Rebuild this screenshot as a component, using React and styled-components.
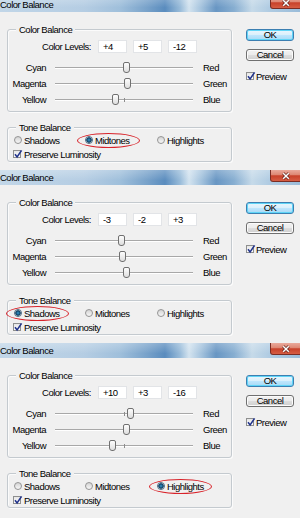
import React from "react";
import styled, { createGlobalStyle } from "styled-components";

const Global = createGlobalStyle`
  html, body { margin: 0; padding: 0; background: #f0f0f0; overflow: hidden; }
  body {
    font-family: "Liberation Sans", Arial, sans-serif;
    font-size: 9.5px;
    letter-spacing: -0.5px;
    color: #000;
  }
`;

const Page = styled.div`
  width: 300px;
  height: 518px;
  overflow: hidden;
`;

const Stack = styled.div`
  margin-top: -3px;
  display: flex;
  flex-direction: column;
`;

const Dialog = styled.section`
  height: 173px;
  display: flex;
  flex-direction: column;
  background: #f0f0f0;
`;

const TitleBar = styled.header`
  height: 15px;
  flex: none;
  display: flex;
  align-items: flex-start;
  background:
    linear-gradient(180deg, rgba(255,255,255,0.25) 0%, rgba(255,255,255,0) 70%),
    linear-gradient(90deg, #c1d6e8 0%, #b5cde3 28%, #9fbfdb 40%, #78a2ca 49%, #5a8cbe 55%,
      #98bbd9 60%, #d3e3ef 63%, #a6c4de 67%, #6896c3 72%, #87aed1 78%, #c6dae9 84%,
      #afcbe2 90%, #9abcd9 100%);
`;

const Title = styled.span`
  flex: 1;
  line-height: 15px;
  color: #000;
`;

const CloseButton = styled.div`
  width: 32px;
  height: 12px;
  margin-right: -2px;
  box-sizing: border-box;
  border: 1px solid #7a2d24;
  border-top: none;
  border-radius: 0 0 3px 3px;
  background: linear-gradient(180deg, #eaaa9c 0%, #dd8672 45%, #c8412a 52%, #d65d43 100%);
  display: flex;
  align-items: center;
  justify-content: center;
`;

const Client = styled.div`
  flex: 1;
  display: flex;
  padding: 17px 6px 0 7px;
  gap: 14px;
`;

const LeftCol = styled.div`
  width: 225px;
  display: flex;
  flex-direction: column;
  gap: 15px;
`;

const RightCol = styled.div`
  width: 48px;
  display: flex;
  flex-direction: column;
`;

const GroupBox = styled.div`
  position: relative;
  border: 1px solid #c4cacf;
  border-radius: 3px;
  box-shadow: inset 1px 1px 0 #fbfbfb, 1px 1px 0 #fbfbfb;
  padding: ${(p) => p.$pad};
  display: flex;
  flex-direction: column;
`;

const GroupTitle = styled.span`
  position: absolute;
  top: -6px;
  left: 8px;
  padding: 0 3px;
  background: #f0f0f0;
  line-height: 11px;
`;

const LevelsRow = styled.div`
  display: flex;
  align-items: center;
  height: 13px;
  margin-bottom: 6px;
`;

const LevelsLabel = styled.span`
  width: 83px;
  text-align: right;
  margin-right: 7px;
`;

const LevelInput = styled.input`
  width: 29px;
  height: 13px;
  box-sizing: border-box;
  border: 1px solid #e2e4e7;
  background: #fff;
  font: inherit;
  letter-spacing: inherit;
  color: #000;
  padding: 0 0 0 4px;
  margin: 0 6px 0 0;
  outline: none;
`;

const SliderRow = styled.div`
  display: flex;
  align-items: center;
  height: 16px;
`;

const SliderLabel = styled.span`
  width: 38px;
  text-align: right;
`;

const Track = styled.div`
  position: relative;
  width: 138px;
  height: 1px;
  margin: 0 10px 0 9px;
  background: #a8a8a8;
  box-shadow: 0 1px 0 #fff;
  &::after {
    content: "";
    position: absolute;
    left: 69px;
    top: -1px;
    width: 1px;
    height: 4px;
    background: #8c8c8c;
  }
`;

const Thumb = styled.span`
  position: absolute;
  top: -5px;
  width: 7px;
  height: 11px;
  margin-left: -3.5px;
  box-sizing: border-box;
  border: 1px solid #707070;
  border-radius: 2px 2px 3px 3px;
  background: linear-gradient(180deg, #fdfdfd, #dedede);
  z-index: 1;
`;

const ToneGrid = styled.div`
  display: grid;
  grid-template-columns: 71px 72px auto;
  align-items: center;
  height: 12px;
  padding-left: 6px;
`;

const Option = styled.label`
  position: relative;
  display: flex;
  align-items: center;
  gap: 2px;
`;

const Radio = styled.span`
  width: 8px;
  height: 8px;
  box-sizing: border-box;
  border-radius: 50%;
  border: 1px solid ${(p) => (p.$on ? "#4d6b82" : "#959595")};
  background: ${(p) =>
    p.$on
      ? "radial-gradient(circle, #3a9ccc 0, #1b5f8c 1.4px, #0f3d5e 2.4px, #cfdbe4 3px, #f4f4f4 4px)"
      : "linear-gradient(180deg, #d4d4d4, #f7f7f7)"};
`;

const Highlight = styled.span`
  position: absolute;
  left: -8px;
  top: -2px;
  width: 63px;
  height: 15px;
  box-sizing: border-box;
  border: 1.5px solid #d8232a;
  border-radius: 50%;
  pointer-events: none;
`;

const CheckRow = styled.label`
  display: flex;
  align-items: center;
  gap: ${(p) => p.$gap}px;
  height: 12px;
  padding-left: ${(p) => p.$indent}px;
  margin-top: ${(p) => p.$top}px;
`;

const CheckBox = styled.span`
  width: 8px;
  height: 8px;
  box-sizing: border-box;
  border: 1px solid #8e8f8f;
  background: linear-gradient(180deg, #e6e6e6, #ffffff);
  position: relative;
  flex: none;
  svg {
    position: absolute;
    left: -1px;
    top: -2px;
  }
`;

const Button = styled.button`
  width: 48px;
  height: 12px;
  box-sizing: border-box;
  padding: 0;
  margin-top: ${(p) => p.$top}px;
  font: inherit;
  letter-spacing: inherit;
  line-height: 10px;
  color: #000;
  border-radius: 3px;
  border: 1px solid ${(p) => (p.$default ? "#3c7fb1" : "#707070")};
  background: ${(p) =>
    p.$default
      ? "linear-gradient(180deg, #eaf6fd 0%, #d9f0fc 50%, #bee6fd 52%, #a7d9f5 100%)"
      : "linear-gradient(180deg, #f2f2f2 0%, #ebebeb 50%, #dddddd 52%, #cfcfcf 100%)"};
  box-shadow: ${(p) =>
    p.$default ? "inset 0 0 0 1px #5fd5f7" : "inset 0 0 0 1px #fbfbfb"};
`;

const Check = () => (
  <svg width="10" height="10" viewBox="0 0 10 10">
    <path d="M2 5.2 L4.1 8 L8.6 1.4" fill="none" stroke="#23358c" strokeWidth="1.6" />
  </svg>
);

const CloseGlyph = () => (
  <svg width="10" height="8" viewBox="0 0 10 8">
    <path d="M2.2 1.2 L7.8 6.8 M7.8 1.2 L2.2 6.8" stroke="#5b1c14" strokeWidth="2.8" />
    <path d="M2.2 1.2 L7.8 6.8 M7.8 1.2 L2.2 6.8" stroke="#ffffff" strokeWidth="1.5" />
  </svg>
);

const fmt = (v) => (v > 0 ? `+${v}` : `${v}`);
const pct = (v) => `${((v + 100) / 200) * 100}%`;

const SLIDERS = [
  ["Cyan", "Red"],
  ["Magenta", "Green"],
  ["Yellow", "Blue"],
];

const TONES = ["Shadows", "Midtones", "Highlights"];

const DIALOGS = [
  { levels: [4, 5, -12], tone: "Midtones" },
  { levels: [-3, -2, 3], tone: "Shadows" },
  { levels: [10, 3, -16], tone: "Highlights" },
];

function ColorBalanceDialog({ levels, tone }) {
  return (
    <Dialog>
      <TitleBar>
        <Title>Color Balance</Title>
        <CloseButton>
          <CloseGlyph />
        </CloseButton>
      </TitleBar>
      <Client>
        <LeftCol>
          <GroupBox $pad="10px 0 4px 0">
            <GroupTitle>Color Balance</GroupTitle>
            <LevelsRow>
              <LevelsLabel>Color Levels:</LevelsLabel>
              {levels.map((v, i) => (
                <LevelInput key={i} readOnly value={fmt(v)} />
              ))}
            </LevelsRow>
            {SLIDERS.map(([l, r], i) => (
              <SliderRow key={l}>
                <SliderLabel>{l}</SliderLabel>
                <Track>
                  <Thumb style={{ left: pct(levels[i]) }} />
                </Track>
                <span>{r}</span>
              </SliderRow>
            ))}
          </GroupBox>
          <GroupBox $pad="6px 0 1px 0">
            <GroupTitle>Tone Balance</GroupTitle>
            <ToneGrid>
              {TONES.map((t) => (
                <Option key={t}>
                  <Radio $on={t === tone} />
                  <span>{t}</span>
                  {t === tone && <Highlight />}
                </Option>
              ))}
            </ToneGrid>
            <CheckRow $indent={5} $gap={3} $top={2}>
              <CheckBox>
                <Check />
              </CheckBox>
              <span>Preserve Luminosity</span>
            </CheckRow>
          </GroupBox>
        </LeftCol>
        <RightCol>
          <Button $default $top={0}>OK</Button>
          <Button $top={8}>Cancel</Button>
          <CheckRow $indent={0} $gap={2} $top={9}>
            <CheckBox>
              <Check />
            </CheckBox>
            <span>Preview</span>
          </CheckRow>
        </RightCol>
      </Client>
    </Dialog>
  );
}

export default function App() {
  return (
    <Page>
      <Global />
      <Stack>
        {DIALOGS.map((d, i) => (
          <ColorBalanceDialog key={i} {...d} />
        ))}
      </Stack>
    </Page>
  );
}
